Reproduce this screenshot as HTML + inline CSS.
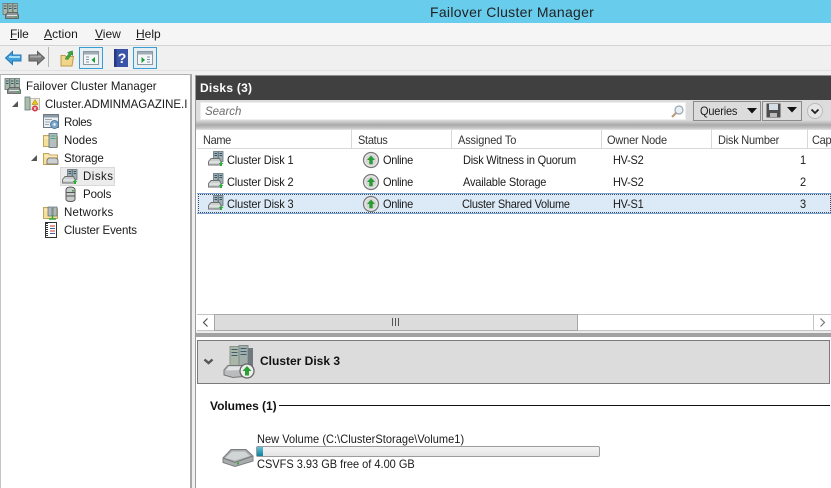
<!DOCTYPE html>
<html><head><meta charset="utf-8">
<style>
html,body{margin:0;padding:0;width:831px;height:488px;overflow:hidden;background:#f0f0f0}
body{position:relative;font-family:"Liberation Sans",sans-serif;font-size:12px;color:#1a1a1a}
.a{position:absolute}
.t{position:absolute;white-space:nowrap;line-height:14px;font-size:12px;transform:scaleX(.9167);transform-origin:0 0}
.m{transform:none}
.n{transform:scaleX(.958)}
svg{position:absolute;overflow:visible}
u{text-decoration:underline}
</style></head><body>
<svg width="0" height="0" style="position:absolute"><defs>
<g id="srv"><rect x="5.500" y=".5" width="4.500" height="10" fill="#9fb0b4" stroke="#66767a" stroke-width=".8"/><rect x="10.500" y=".5" width="4.500" height="10" fill="#9fb0b4" stroke="#66767a" stroke-width=".8"/><path d="M6.500 2.500h2.500M6.500 4.500h2.500M11.500 2.500h2.500M11.500 4.500h2.500" stroke="#35586c"/><path d="M.5 10.500L3 7.500h8.500L13 10.500v3.500H.5z" fill="#c9cfcf" stroke="#6d6d6d" stroke-width=".9"/><path d="M1.500 11h11" stroke="#f2f2f2"/><path d="M13 10.500l2.500 2.500h-1.500v2h-2v-2h-1.500z" fill="#2fae3a"/></g>
<g id="root"><rect x="1" y=".5" width="4.500" height="11" fill="#a8b8a8" stroke="#66767a" stroke-width=".8"/><rect x="6" y=".5" width="4.500" height="11" fill="#a8b8a8" stroke="#66767a" stroke-width=".8"/><rect x="11" y=".5" width="4.500" height="11" fill="#a8b8a8" stroke="#66767a" stroke-width=".8"/><path d="M2 3h2.500M2 5.500h2.500M7 3h2.500M7 5.500h2.500M12 3h2.500M12 5.500h2.500" stroke="#35586c"/><path d="M3.500 12L5.500 9.500h9.500L16.500 12v3.500h-13z" fill="#8d9494" stroke="#555" stroke-width=".8"/><path d="M5 12.500h10" stroke="#dfe4e4"/><rect x="13" y="13" width="2" height="1.500" fill="#3fb04a"/></g>
<g id="folder"><path d="M.5 3.500v11h14v-9.500h-7.500l-1.500-1.500z" fill="#f6df9c" stroke="#c2a45a"/><path d="M1.500 6h12" stroke="#fff6d2"/></g>
<g id="up"><circle cx="8" cy="8" r="7.500" fill="#e8e8e8" stroke="#777" stroke-width="1.200"/><circle cx="8" cy="8" r="5.500" fill="#d6d6d6"/><path d="M8 3.500L12 8H9.700v4.200H6.300V8H4z" fill="#2b9c35"/></g>
</defs></svg>

<!-- Title bar -->
<div class="a" style="left:0;top:0;width:831px;height:23px;background:#68cdec"></div>
<svg style="left:2px;top:2px" width="17" height="17" viewBox="0 0 17 17"><use href="#root" y="1"/></svg>
<div class="t m" style="left:430px;top:4px;font-size:14px;line-height:16px;letter-spacing:.29px;color:#222">Failover Cluster Manager</div>

<!-- Menu -->
<div class="a" style="left:0;top:23px;width:831px;height:22px;background:#f5f5f5;border-bottom:1px solid #d4d4d4"></div>
<div class="t m" style="left:10px;top:27px;letter-spacing:-.2px"><u>F</u>ile</div>
<div class="t m" style="left:44px;top:27px;letter-spacing:.1px"><u>A</u>ction</div>
<div class="t m" style="left:95px;top:27px;letter-spacing:0"><u>V</u>iew</div>
<div class="t m" style="left:136px;top:27px;letter-spacing:0"><u>H</u>elp</div>

<!-- Toolbar -->
<svg style="left:5px;top:51px" width="17" height="14" viewBox="0 0 17 14"><path d="M.5 7L7.500 .5V4H16V10H7.500V13.500z" fill="#3f9fdc" stroke="#2a78b4"/><path d="M4 6h11" stroke="#a5dcf5" stroke-width="2"/></svg>
<svg style="left:28px;top:51px" width="17" height="14" viewBox="0 0 17 14"><path d="M16.500 7L9.500 .5V4H1V10H9.500V13.500z" fill="#7d7d7d" stroke="#5c5c5c"/><path d="M2 5.500h11" stroke="#aaa" stroke-width="2"/></svg>
<div class="a" style="left:48px;top:47px;width:1px;height:20px;background:#b4b4b4"></div>
<svg style="left:60px;top:50px" width="15" height="17" viewBox="0 0 15 17"><path d="M1 5.500h4l1 1h7.500l-1.500 9.500h-11z" fill="#f0d68a" stroke="#bb9a4c"/><path d="M5 9L9 3.500 7.500 2.500 12.500 .8 12.800 5.500 11.200 4.700 8 9.500z" fill="#3aa53f" stroke="#2b7f30" stroke-width=".5"/></svg>
<div class="a" style="left:79px;top:47px;width:22px;height:20px;border:1px solid #3a9ed6;background:#e6eff4"></div>
<svg style="left:83px;top:51px" width="17" height="15" viewBox="0 0 17 15"><rect x=".5" y=".5" width="15" height="13" fill="#f4f6f7" stroke="#8a98a0"/><rect x="1" y="1" width="14" height="2.500" fill="#a0adb6"/><path d="M3 6h3M3 8.500h3M3 11h3" stroke="#7e98aa"/><path d="M12 6v6L8.500 9z" fill="#1c9b35"/></svg>
<svg style="left:114px;top:49px" width="14" height="18" viewBox="0 0 14 18"><rect width="14" height="18" fill="#3a53a8"/><rect width="2.500" height="18" fill="#253a80"/><text x="8" y="14" font-family="Liberation Sans" font-size="14" font-weight="bold" fill="#fff" text-anchor="middle">?</text></svg>
<div class="a" style="left:133px;top:47px;width:22px;height:20px;border:1px solid #3a9ed6;background:#e6eff4"></div>
<svg style="left:137px;top:51px" width="17" height="15" viewBox="0 0 17 15"><rect x=".5" y=".5" width="15" height="13" fill="#f4f6f7" stroke="#8a98a0"/><rect x="1" y="1" width="14" height="2.500" fill="#a0adb6"/><path d="M10 6h3M10 8.500h3M10 11h3" stroke="#7e98aa"/><path d="M4.500 6v6L8 9z" fill="#1c9b35"/></svg>
<div class="a" style="left:0;top:70px;width:831px;height:1px;background:#e2e2e2"></div>

<!-- Tree pane -->
<div class="a" style="left:0;top:74px;width:190px;height:414px;background:#fff;border-right:2px solid #a8a8a8;border-top:1px solid #b0b0b0;box-sizing:content-box"></div>
<div class="a" style="left:0;top:75px;width:1px;height:413px;background:#c4c4c4"></div>
<svg style="left:4px;top:77px" width="17" height="17" viewBox="0 0 17 17"><use href="#root" y="1"/></svg>
<div class="t n" style="left:26px;top:79px;letter-spacing:.07px">Failover Cluster Manager</div>
<svg style="left:11px;top:100px" width="8" height="8"><path d="M7 1v6H1z" fill="#555"/></svg>
<svg style="left:24px;top:96px" width="17" height="16" viewBox="0 0 17 16"><rect x="1" y="1" width="5" height="13" fill="#a8c0a8" stroke="#68787f" stroke-width=".8"/><path d="M6.500 2.500h9v11h-9z" fill="#f2ecd6" stroke="#aaa" stroke-width=".8"/><path d="M11 3.500l3 5h-6z" fill="#f1c40f" stroke="#927a14" stroke-width=".5"/><circle cx="11" cy="12.500" r="3" fill="#cf3a4a"/><path d="M9.800 11.300l2.400 2.400M12.200 11.300l-2.400 2.400" stroke="#fff" stroke-width=".7"/></svg>
<div class="t n" style="left:45px;top:97px;width:151px;overflow:hidden">Cluster.ADMINMAGAZINE.I</div>
<svg style="left:43px;top:114px" width="18" height="16" viewBox="0 0 18 16"><rect x=".5" y=".5" width="15" height="13" fill="#eef1f3" stroke="#6c7b84"/><rect x="1" y="1" width="14" height="2.500" fill="#8c9aa4"/><path d="M2 5.500h7M2 8h5M2 10.500h4" stroke="#9aa7b0"/><circle cx="11.500" cy="10.500" r="4" fill="#7ba8cc" stroke="#4f7d9f"/><circle cx="11.500" cy="10.500" r="1.200" fill="#fff"/></svg>
<div class="t n" style="left:64px;top:115px;letter-spacing:-.35px">Roles</div>
<svg style="left:43px;top:132px" width="16" height="16" viewBox="0 0 16 16"><use href="#folder"/><rect x="6" y="1.500" width="8" height="14" fill="#b4bfc4" stroke="#5d6d72" stroke-width=".8"/><path d="M7.500 4h5M7.500 6.500h5" stroke="#4a7"/></svg>
<div class="t n" style="left:64px;top:133px;letter-spacing:.05px">Nodes</div>
<svg style="left:30px;top:154px" width="8" height="8"><path d="M7 1v6H1z" fill="#555"/></svg>
<svg style="left:43px;top:150px" width="16" height="16" viewBox="0 0 16 16"><use href="#folder"/><path d="M4 10l1.500-2h8L15 10v4H4z" fill="#ccd0d0" stroke="#666" stroke-width=".8"/></svg>
<div class="t n" style="left:64px;top:151px;letter-spacing:-.08px">Storage</div>
<div class="a" style="left:60px;top:167px;width:53px;height:17px;background:#ececec;border:1px solid #d9d9d9"></div>
<svg style="left:62px;top:168px" width="16" height="16" viewBox="0 0 16 16"><use href="#srv" y="1"/></svg>
<div class="t n" style="left:83px;top:169px;letter-spacing:.5px">Disks</div>
<svg style="left:65px;top:186px" width="12" height="16" viewBox="0 0 12 16"><path d="M1 3.500a4.500 2.500 0 0 1 9 0v10a4.500 2 0 0 1-9 0z" fill="#c8cccc" stroke="#555"/><path d="M1 6.500h9M1 10h9" stroke="#555"/><rect x="7" y="4" width="2" height="1.500" fill="#3a3"/></svg>
<div class="t n" style="left:83px;top:187px;letter-spacing:-.1px">Pools</div>
<svg style="left:43px;top:204px" width="16" height="16" viewBox="0 0 16 16"><use href="#folder"/><rect x="5" y="3" width="4" height="9" fill="#aeb9be" stroke="#5d6d72" stroke-width=".7"/><rect x="10" y="3" width="4" height="9" fill="#aeb9be" stroke="#5d6d72" stroke-width=".7"/><path d="M9.500 11v3M6 15h7" stroke="#2da53a" stroke-width="1.500"/></svg>
<div class="t n" style="left:64px;top:205px;letter-spacing:.2px">Networks</div>
<svg style="left:44px;top:222px" width="14" height="16" viewBox="0 0 14 16"><rect x="1.500" y=".5" width="11" height="15" fill="#fff" stroke="#333"/><path d="M3 1v14" stroke="#333" stroke-dasharray="1 1" stroke-width="2"/><path d="M6 4h5" stroke="#c33"/><path d="M6 6.500h5" stroke="#36a"/><path d="M6 9h5" stroke="#c33"/><path d="M6 11.500h5" stroke="#36a"/></svg>
<div class="t n" style="left:64px;top:223px;letter-spacing:-.14px">Cluster Events</div>

<!-- Right pane -->
<div class="a" style="left:195px;top:75px;width:636px;height:413px;background:#fff;border-left:1px solid #9a9a9a"></div>
<div class="a" style="left:196px;top:75px;width:635px;height:25px;background:#404040;border-top:1px solid #8e8e8e;box-sizing:border-box"></div>
<div class="t m" style="left:200px;top:81px;color:#fff;font-weight:bold;letter-spacing:.25px">Disks (3)</div>
<div class="a" style="left:196px;top:100px;width:635px;height:30px;background:linear-gradient(#dcdcdc 0,#dcdcdc 20px,#a9a9a9 25px,#c4c4c4 28px,#e6e6e6 30px)"></div>
<div class="a" style="left:200px;top:102px;width:486px;height:18px;background:#fff;border:1px solid #eee;box-sizing:border-box"></div>
<div class="t n" style="left:205px;top:104px;font-style:italic;color:#6d6d6d">Search</div>
<svg style="left:670px;top:104px" width="15" height="15" viewBox="0 0 15 15"><circle cx="9" cy="6" r="4" fill="#e8f0f6" stroke="#9aa6ae" stroke-width="1.200"/><path d="M6 9L2 13" stroke="#b89a72" stroke-width="2"/></svg>
<div class="a" style="left:693px;top:101px;width:68px;height:20px;background:#dcdcdc;border:1px solid #8a8a8a;box-sizing:border-box"></div>
<div class="t" style="left:700px;top:104px;letter-spacing:-.2px">Queries</div>
<svg style="left:747px;top:108px" width="11" height="6"><path d="M0 0h10L5 5.500z" fill="#111"/></svg>
<div class="a" style="left:762px;top:101px;width:40px;height:20px;background:#dcdcdc;border:1px solid #8a8a8a;box-sizing:border-box"></div>
<svg style="left:766px;top:103px" width="15" height="15" viewBox="0 0 15 15"><path d="M.5.500H14.500V14.500H.5z" fill="#4d4d4d"/><rect x="3" y="1" width="9" height="6" fill="#d4dde4"/><rect x="4" y="10" width="7" height="4" fill="#bbb"/></svg>
<svg style="left:787px;top:107px" width="11" height="6"><path d="M0 0h10L5 5.500z" fill="#111"/></svg>
<svg style="left:807px;top:103px" width="16" height="16" viewBox="0 0 16 16"><circle cx="8" cy="8" r="7.500" fill="#e6e6e6" stroke="#bbb"/><path d="M4.500 6.500L8 10l3.500-3.500" fill="none" stroke="#222" stroke-width="1.800"/></svg>

<!-- Column headers -->
<div class="a" style="left:197px;top:130px;width:634px;height:19px;background:#fff;border-bottom:1px solid #d8d8d8;box-sizing:border-box"></div>
<div class="a" style="left:351px;top:130px;width:1px;height:18px;background:#d8d8d8"></div>
<div class="a" style="left:451px;top:130px;width:1px;height:18px;background:#d8d8d8"></div>
<div class="a" style="left:601px;top:130px;width:1px;height:18px;background:#d8d8d8"></div>
<div class="a" style="left:711px;top:130px;width:1px;height:18px;background:#d8d8d8"></div>
<div class="a" style="left:807px;top:130px;width:1px;height:18px;background:#d8d8d8"></div>
<div class="t" style="left:203px;top:133px;color:#333;letter-spacing:-.4px">Name</div>
<div class="t" style="left:358px;top:133px;color:#333;letter-spacing:-.3px">Status</div>
<div class="t" style="left:458px;top:133px;color:#333;letter-spacing:-.15px">Assigned To</div>
<div class="t" style="left:607px;top:133px;color:#333;letter-spacing:-.2px">Owner Node</div>
<div class="t" style="left:718px;top:133px;color:#333;letter-spacing:-.25px">Disk Number</div>
<div class="t" style="left:812px;top:133px;color:#333;letter-spacing:-.3px">Cap</div>

<!-- Rows -->
<div class="a" style="left:197px;top:193px;width:634px;height:21px;background:#dce9f6;border-top:1px solid #7da2ce;border-bottom:1px solid #7da2ce;box-sizing:border-box"></div>
<div class="a" style="left:198px;top:194px;width:633px;height:19px;border:1px dotted #3a4a60;box-sizing:border-box"></div>

<svg style="left:208px;top:151px" width="16" height="16" viewBox="0 0 16 16"><use href="#srv" y="0"/></svg>
<div class="t" style="left:227px;top:153px;letter-spacing:-.15px">Cluster Disk 1</div>
<svg style="left:363px;top:152px" width="16" height="16" viewBox="0 0 16 16"><use href="#up"/></svg>
<div class="t" style="left:383px;top:153px;letter-spacing:-.35px">Online</div>
<div class="t" style="left:463px;top:153px;letter-spacing:-.25px">Disk Witness in Quorum</div>
<div class="t" style="left:613px;top:153px;letter-spacing:-.3px">HV-S2</div>
<div class="t" style="left:800px;top:153px">1</div>

<svg style="left:208px;top:173px" width="16" height="16" viewBox="0 0 16 16"><use href="#srv" y="0"/></svg>
<div class="t" style="left:227px;top:175px;letter-spacing:-.15px">Cluster Disk 2</div>
<svg style="left:363px;top:174px" width="16" height="16" viewBox="0 0 16 16"><use href="#up"/></svg>
<div class="t" style="left:383px;top:175px;letter-spacing:-.35px">Online</div>
<div class="t" style="left:463px;top:175px;letter-spacing:-.18px">Available Storage</div>
<div class="t" style="left:613px;top:175px;letter-spacing:-.3px">HV-S2</div>
<div class="t" style="left:800px;top:175px">2</div>

<svg style="left:208px;top:195px" width="16" height="16" viewBox="0 0 16 16"><use href="#srv" y="0"/></svg>
<div class="t" style="left:227px;top:197px;letter-spacing:-.15px">Cluster Disk 3</div>
<svg style="left:363px;top:196px" width="16" height="16" viewBox="0 0 16 16"><use href="#up"/></svg>
<div class="t" style="left:383px;top:197px;letter-spacing:-.35px">Online</div>
<div class="t" style="left:462px;top:197px;letter-spacing:-.28px">Cluster Shared Volume</div>
<div class="t" style="left:613px;top:197px;letter-spacing:-.3px">HV-S1</div>
<div class="t" style="left:800px;top:197px">3</div>

<!-- Scrollbar -->
<div class="a" style="left:197px;top:314px;width:634px;height:17px;background:#fff;border-top:1px solid #c4c4c4;border-bottom:1px solid #c4c4c4;box-sizing:border-box"></div>
<div class="a" style="left:214px;top:314px;width:364px;height:17px;background:#dcdcdc;border:1px solid #a8a8a8;box-sizing:border-box"></div>
<svg style="left:202px;top:318px" width="7" height="9"><path d="M5.500 .5L1.500 4.500l4 4" fill="none" stroke="#555" stroke-width="1.200"/></svg>
<div class="a" style="left:813px;top:314px;width:1px;height:17px;background:#c4c4c4"></div>
<svg style="left:819px;top:318px" width="7" height="9"><path d="M1.500 .5l4 4-4 4" fill="none" stroke="#777" stroke-width="1.200"/></svg>
<svg style="left:392px;top:318px" width="8" height="8"><path d="M.5 0v8M3.500 0v8M6.500 0v8" stroke="#555"/></svg>

<!-- Splitter -->
<div class="a" style="left:196px;top:331px;width:635px;height:2px;background:#ececec"></div>
<div class="a" style="left:196px;top:333px;width:635px;height:4px;background:#a2a2a2"></div>

<!-- Details header -->
<div class="a" style="left:197px;top:340px;width:633px;height:44px;background:#dcdcdc;border:1px solid #7a7a7a;box-sizing:border-box"></div>
<svg style="left:203px;top:358px" width="11" height="8"><path d="M1.500 1.500L5.500 5l4-3.500" fill="none" stroke="#555" stroke-width="2.400"/></svg>
<svg style="left:223px;top:345px" width="33" height="33" viewBox="0 0 33 33"><rect x="7" y="1.500" width="9" height="21" fill="#aab6a6" stroke="#8a9690"/><rect x="16" y=".5" width="9" height="22" fill="#a2aeaa" stroke="#7c8a88"/><rect x="25" y="3" width="5" height="20" fill="#6e7a7e"/><path d="M8.500 4.500h6M8.500 7.500h6M8.500 10.500h6M17.500 3.500h6M17.500 6.500h6M17.500 9.500h6" stroke="#3e5c6f"/><path d="M1 25L5 20.500H22L25 25V31L10 32.500 1 30z" fill="#b8bcbc" stroke="#777"/><path d="M3 25.500L6 21.500H20L22 25z" fill="#e2e4e4"/><circle cx="24" cy="26" r="7" fill="#eee" stroke="#666" stroke-width="1.300"/><path d="M24 21L28.500 26H26V30.500H22V26H19.500z" fill="#2aa035"/></svg>
<div class="t m" style="left:260px;top:354px;font-weight:bold;color:#111">Cluster Disk 3</div>

<!-- Volumes -->
<div class="t m" style="left:210px;top:399px;font-weight:bold;color:#111;letter-spacing:-.05px">Volumes (1)</div>
<div class="a" style="left:279px;top:405px;width:551px;height:1px;background:#111"></div>
<svg style="left:222px;top:448px" width="32" height="19" viewBox="0 0 32 19"><path d="M1 10L9 1.500H24L31 8V13L13 18.500 1 14.500z" fill="#a9acac" stroke="#7c7f7f"/><path d="M1 10L13 14.500 31 8" fill="none" stroke="#777"/><path d="M3 10L10 3.500H23L28 8 13 12.500z" fill="#d2d5d5"/><rect x="15" y="14.500" width="2" height="2" fill="#3a3"/></svg>
<div class="t" style="left:257px;top:432px;letter-spacing:.05px">New Volume (C:\ClusterStorage\Volume1)</div>
<div class="a" style="left:256px;top:446px;width:344px;height:11px;background:linear-gradient(#f4f4f4,#e4e4e4);border:1px solid #9c9c9c;border-radius:2px;box-sizing:border-box"></div>
<div class="a" style="left:257px;top:447px;width:6px;height:9px;background:linear-gradient(#66c0d4,#0f7f9f)"></div>
<div class="t" style="left:257px;top:457px">CSVFS 3.93 GB free of 4.00 GB</div>
</body></html>
